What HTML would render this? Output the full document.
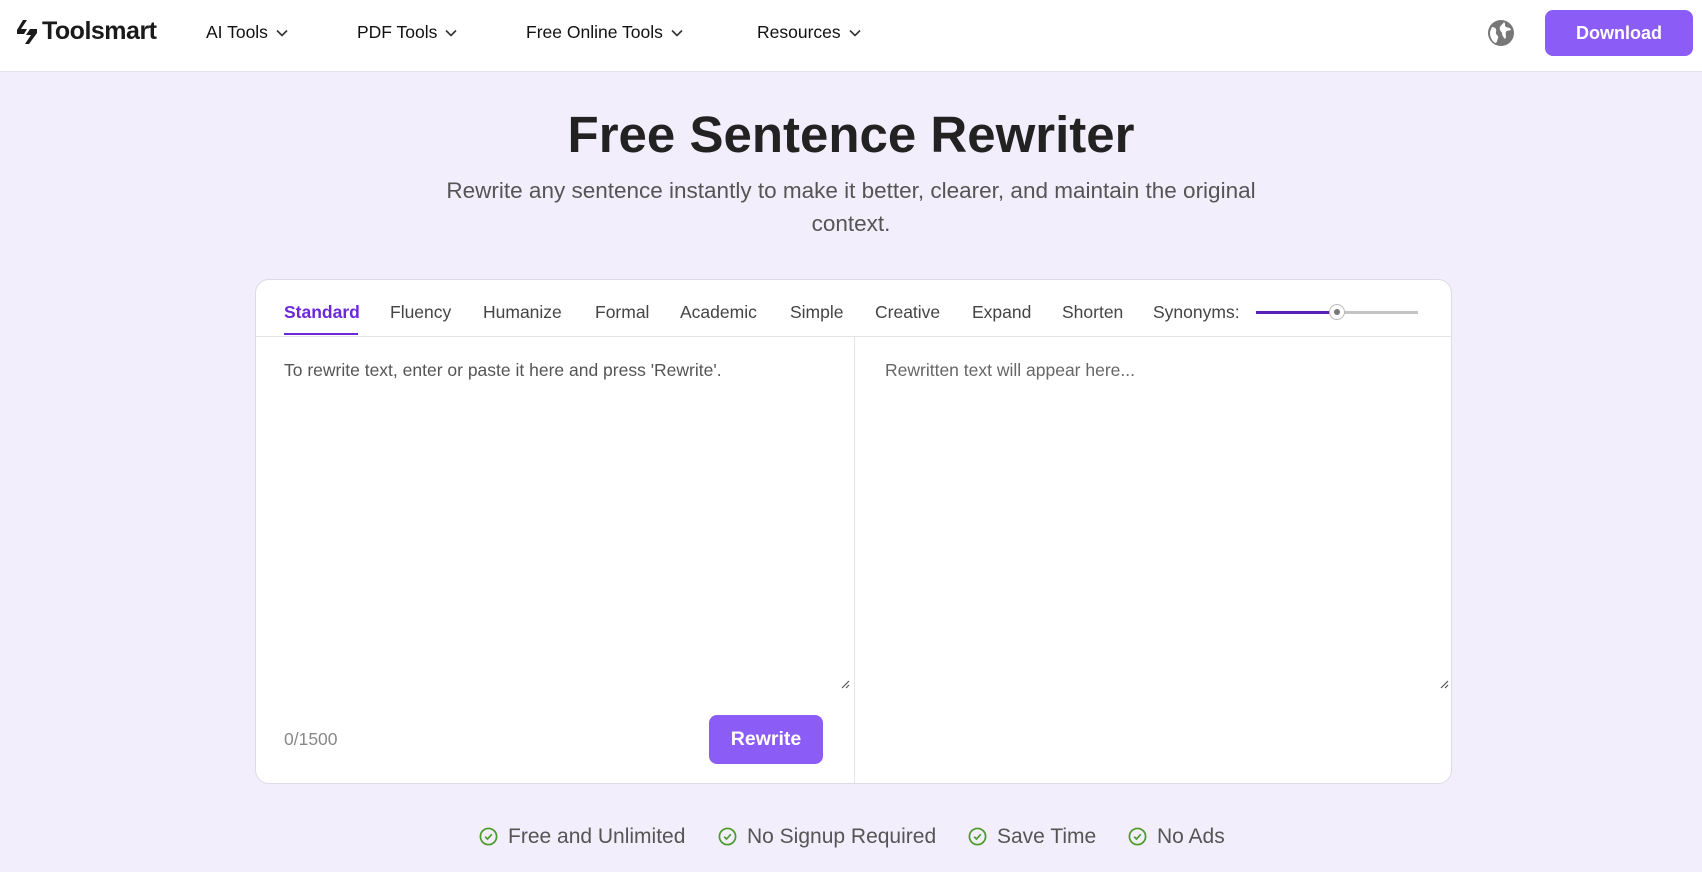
<!DOCTYPE html>
<html><head><meta charset="utf-8"><style>
*{margin:0;padding:0;box-sizing:border-box}
body{width:1702px;height:872px;background:#f2eefb;font-family:"Liberation Sans",sans-serif;position:relative;overflow:hidden;color:#222}
.hdr{position:absolute;left:0;top:0;width:1702px;height:72px;background:#fff;border-bottom:1px solid #e4e0ef}
.a{position:absolute;white-space:nowrap}
.nav{font-size:17.5px;color:#111;top:22px}
.nav svg{margin-left:8px;vertical-align:middle}
.card{position:absolute;left:255px;top:279px;width:1197px;height:505px;background:#fff;border:1px solid #dcdce4;border-radius:14px}
.tab{font-size:17.5px;color:#444;top:302px}
.feat{font-size:21px;color:#555;top:825px}
.feat svg{vertical-align:-3px;margin-right:10px}
</style></head><body>
<div class="hdr"></div>
<svg class="a" style="left:15px;top:19px" width="24" height="26" viewBox="0 0 24 26"><path d="M8 1 L12 1 L6 10 L12 10 L9 15 L2 15 L2 11 Z" fill="#1a1a1a"/><path d="M15 10 L22 10 L22 14 L14 25 L10 25 L16 16 L11 16 Z" fill="#1a1a1a"/></svg>
<div class="a" style="left:42px;top:17px;font-size:25px;font-weight:bold;letter-spacing:-0.5px;color:#1a1a1a">Toolsmart</div>
<div class="a nav" style="left:206px">AI Tools<svg width="12" height="8" viewBox="0 0 12 8"><path d="M1 1.5l5 5 5-5" stroke="#333" stroke-width="1.6" fill="none"/></svg></div>
<div class="a nav" style="left:357px">PDF Tools<svg width="12" height="8" viewBox="0 0 12 8"><path d="M1 1.5l5 5 5-5" stroke="#333" stroke-width="1.6" fill="none"/></svg></div>
<div class="a nav" style="left:526px">Free Online Tools<svg width="12" height="8" viewBox="0 0 12 8"><path d="M1 1.5l5 5 5-5" stroke="#333" stroke-width="1.6" fill="none"/></svg></div>
<div class="a nav" style="left:757px">Resources<svg width="12" height="8" viewBox="0 0 12 8"><path d="M1 1.5l5 5 5-5" stroke="#333" stroke-width="1.6" fill="none"/></svg></div>
<svg class="a" style="left:1486px;top:18px" width="30" height="30" viewBox="0 0 30 30"><circle cx="15" cy="15" r="13" fill="#777"/><path d="M6 9c3 0 5 2 4 5s3 3 2 6-1 5-3 5c-3-2-5-6-5-10 0-2 1-4 2-6zM18 4c2 2 0 4 2 5s4 0 5 3c-2 1-4 0-5 2s1 5-1 7c-2-2-3-4-3-6-1-2-3-3-2-6 1-2 3-3 4-5z" fill="#fff"/></svg>
<div class="a" style="left:1545px;top:10px;width:148px;height:46px;background:#8b5cf6;border-radius:8px;color:#fff;font-weight:bold;font-size:18px;text-align:center;line-height:46px">Download</div>
<div class="a" style="left:0;width:1702px;top:105px;text-align:center;font-size:51px;font-weight:bold;color:#222">Free Sentence Rewriter</div>
<div class="a" style="left:441px;width:820px;top:174px;text-align:center;font-size:22.5px;color:#555;line-height:33px;white-space:normal">Rewrite any sentence instantly to make it better, clearer, and maintain the original context.</div>
<div class="card"></div>
<div class="a" style="left:256px;top:336px;width:1195px;height:1px;background:#e3e3e8"></div>
<div class="a" style="left:854px;top:337px;width:1px;height:446px;background:#e3e3e8"></div>
<div class="a tab" style="left:284px;color:#6d28d9;font-weight:bold">Standard</div>
<div class="a" style="left:284px;top:333px;width:74px;height:2px;background:#6d28d9"></div>
<div class="a tab" style="left:390px">Fluency</div>
<div class="a tab" style="left:483px">Humanize</div>
<div class="a tab" style="left:595px">Formal</div>
<div class="a tab" style="left:680px">Academic</div>
<div class="a tab" style="left:790px">Simple</div>
<div class="a tab" style="left:875px">Creative</div>
<div class="a tab" style="left:972px">Expand</div>
<div class="a tab" style="left:1062px">Shorten</div>
<div class="a tab" style="left:1153px">Synonyms:</div>
<div class="a" style="left:1256px;top:311px;width:82px;height:3px;background:#5b21b6"></div>
<div class="a" style="left:1338px;top:311px;width:80px;height:3px;background:#c4c4c4"></div>
<div class="a" style="left:1329px;top:304px;width:16px;height:16px;border-radius:50%;background:#fff;border:1px solid #bbb"></div>
<div class="a" style="left:1334px;top:309px;width:6px;height:6px;border-radius:50%;background:#777"></div>
<div class="a" style="left:284px;top:360px;font-size:17.5px;color:#555">To rewrite text, enter or paste it here and press 'Rewrite'.</div>
<div class="a" style="left:885px;top:360px;font-size:17.5px;color:#666">Rewritten text will appear here...</div>
<svg class="a" style="left:840px;top:679px" width="10" height="10"><path d="M9 2L2 9M9 6L6 9" stroke="#555" stroke-width="1.2"/></svg>
<svg class="a" style="left:1439px;top:679px" width="10" height="10"><path d="M9 2L2 9M9 6L6 9" stroke="#555" stroke-width="1.2"/></svg>
<div class="a" style="left:284px;top:729px;font-size:17.5px;color:#888">0/1500</div>
<div class="a" style="left:709px;top:715px;width:114px;height:49px;background:#8b5cf6;border-radius:8px;color:#fff;font-weight:bold;font-size:19.5px;text-align:center;line-height:49px">Rewrite</div>
<div class="a feat" style="left:479px"><svg width="19" height="19" viewBox="0 0 20 20"><circle cx="10" cy="10" r="8.5" fill="none" stroke="#4b9a2b" stroke-width="1.8"/><path d="M6.5 10.3l2.4 2.4 4.6-5" fill="none" stroke="#4b9a2b" stroke-width="1.8"/></svg>Free and Unlimited</div>
<div class="a feat" style="left:718px"><svg width="19" height="19" viewBox="0 0 20 20"><circle cx="10" cy="10" r="8.5" fill="none" stroke="#4b9a2b" stroke-width="1.8"/><path d="M6.5 10.3l2.4 2.4 4.6-5" fill="none" stroke="#4b9a2b" stroke-width="1.8"/></svg>No Signup Required</div>
<div class="a feat" style="left:968px"><svg width="19" height="19" viewBox="0 0 20 20"><circle cx="10" cy="10" r="8.5" fill="none" stroke="#4b9a2b" stroke-width="1.8"/><path d="M6.5 10.3l2.4 2.4 4.6-5" fill="none" stroke="#4b9a2b" stroke-width="1.8"/></svg>Save Time</div>
<div class="a feat" style="left:1128px"><svg width="19" height="19" viewBox="0 0 20 20"><circle cx="10" cy="10" r="8.5" fill="none" stroke="#4b9a2b" stroke-width="1.8"/><path d="M6.5 10.3l2.4 2.4 4.6-5" fill="none" stroke="#4b9a2b" stroke-width="1.8"/></svg>No Ads</div>
</body></html>
